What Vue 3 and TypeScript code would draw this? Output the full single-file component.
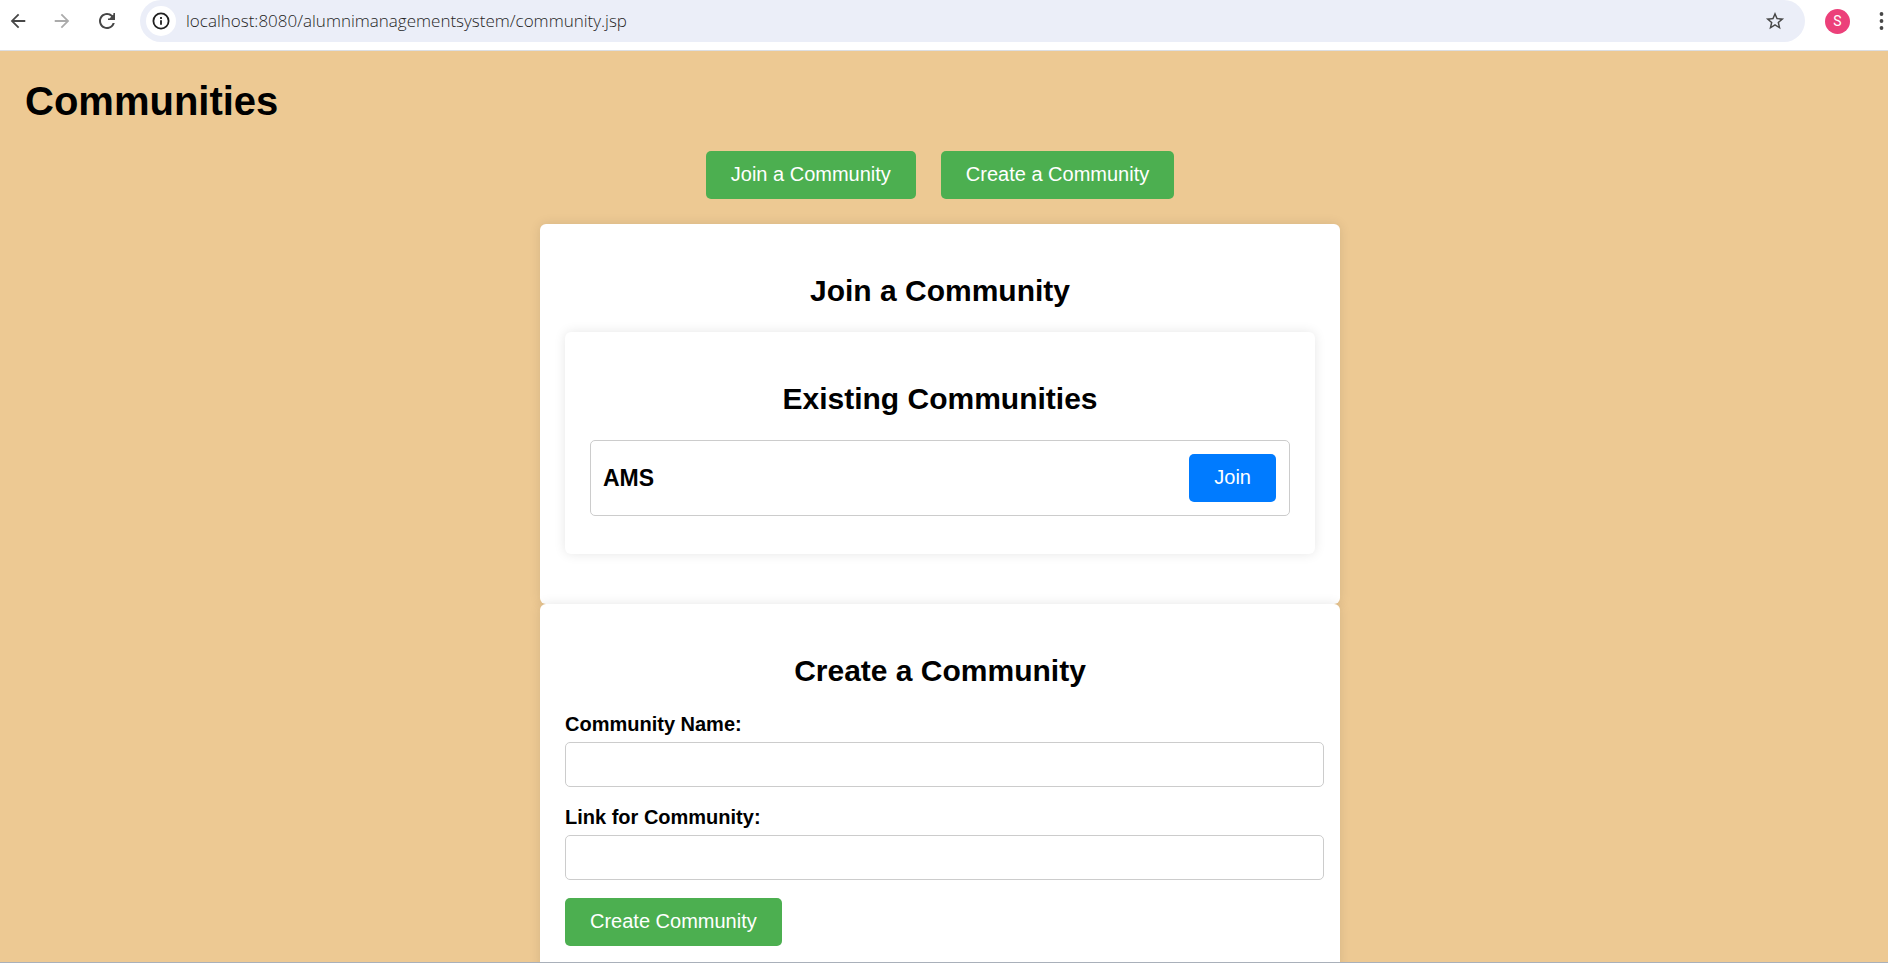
<script setup lang="ts">
import { ref } from 'vue'

interface Community {
  id: number
  name: string
}

const url = ref('localhost:8080/alumnimanagementsystem/community.jsp')
const communities = ref<Community[]>([{ id: 1, name: 'AMS' }])
const communityName = ref('')
const communityLink = ref('')

function createCommunity(): void {
  if (!communityName.value) return
  communities.value.push({ id: communities.value.length + 1, name: communityName.value })
  communityName.value = ''
  communityLink.value = ''
}
</script>

<template>
  <div class="window">
    <header class="toolbar">
      <div class="history">
        <button class="icon-btn" type="button" aria-label="Back">
          <svg viewBox="1 1 22 22" fill="#474747">
            <path d="M20 11H7.83l5.59-5.59L12 4l-8 8 8 8 1.41-1.41L7.83 13H20v-2z" />
          </svg>
        </button>
        <button class="icon-btn" type="button" aria-label="Forward">
          <svg viewBox="1 1 22 22" fill="#ababab">
            <path d="M4 11h12.17l-5.59-5.59L12 4l8 8-8 8-1.41-1.41L16.17 13H4v-2z" />
          </svg>
        </button>
        <button class="icon-btn" type="button" aria-label="Reload">
          <svg viewBox="1 2 20 20" fill="#474747">
            <path d="M17.65 6.35A7.958 7.958 0 0 0 12 4c-4.42 0-7.99 3.58-8 8s3.57 8 7.99 8c3.73 0 6.84-2.55 7.73-6h-2.08A5.99 5.99 0 0 1 12 18c-3.31 0-6-2.69-6-6s2.69-6 6-6c1.66 0 3.14.69 4.22 1.78L14.5 9.5H13V11h7V4h-1.6v1.6z" />
          </svg>
        </button>
      </div>
      <div class="address">
        <button class="info" type="button" aria-label="View site information">
          <svg viewBox="0 0 18 18" fill="none" stroke="#1f1f1f" stroke-width="1.8">
            <circle cx="9" cy="9" r="7.6" />
            <path d="M9 8.2v4.6M9 5v1.9" />
          </svg>
        </button>
        <input v-model="url" class="url" type="text" aria-label="Address" spellcheck="false" />
        <button class="icon-btn" type="button" aria-label="Bookmark this page">
          <svg viewBox="1 1 22 22" fill="#474747">
            <path d="M22 9.24l-7.19-.62L12 2 9.19 8.63 2 9.24l5.46 4.73L5.82 21 12 17.27 18.18 21l-1.63-7.03L22 9.24zM12 15.4l-3.76 2.27 1-4.28-3.32-2.88 4.38-.38L12 6.1l1.71 4.04 4.38.38-3.32 2.88 1 4.28L12 15.4z" />
          </svg>
        </button>
      </div>
      <div class="account">
        <button class="avatar" type="button" aria-label="Profile">S</button>
        <button class="menu" type="button" aria-label="Menu">
          <svg viewBox="0 0 13 20" fill="#474747">
            <circle cx="6.5" cy="3" r="1.9" />
            <circle cx="6.5" cy="10" r="1.9" />
            <circle cx="6.5" cy="17" r="1.9" />
          </svg>
        </button>
      </div>
    </header>

    <main class="page">
      <h1>Communities</h1>
      <nav class="actions">
        <button class="btn" type="button">Join a Community</button>
        <button class="btn" type="button">Create a Community</button>
      </nav>

      <section class="card">
        <h2>Join a Community</h2>
        <div class="card inner">
          <h2>Existing Communities</h2>
          <div v-for="c in communities" :key="c.id" class="community">
            <h3>{{ c.name }}</h3>
            <button class="btn join" type="button">Join</button>
          </div>
        </div>
      </section>

      <section class="card">
        <h2>Create a Community</h2>
        <form @submit.prevent="createCommunity">
          <div class="field">
            <label for="community-name">Community Name:</label>
            <input id="community-name" v-model="communityName" type="text" />
          </div>
          <div class="field">
            <label for="community-link">Link for Community:</label>
            <input id="community-link" v-model="communityLink" type="text" />
          </div>
          <button class="btn" type="submit">Create Community</button>
        </form>
      </section>
    </main>
  </div>
</template>

<style>
body {
  margin: 0;
}
</style>

<style scoped>
* {
  box-sizing: border-box;
}

.window {
  display: flex;
  flex-direction: column;
  height: 100vh;
  border-bottom: 1px solid #a9b0ba;
  font-family: "Liberation Sans", Arial, sans-serif;
  color: #000;
}

button {
  border: none;
  padding: 0;
  background: none;
  cursor: pointer;
}

svg {
  display: block;
  width: 100%;
  height: 100%;
}

.toolbar {
  display: flex;
  flex: none;
  padding: 0 0 8px 8px;
  background: #fff;
  border-bottom: 1px solid #dcdee2;
}

.history {
  display: flex;
  align-items: center;
  gap: 24px;
  margin-right: 24px;
}

.account {
  display: flex;
  align-items: center;
  gap: 25px;
  margin-left: 20px;
}

.icon-btn {
  flex: none;
  width: 20px;
  height: 20px;
}

.address {
  display: flex;
  flex: 1;
  align-items: center;
  height: 42px;
  padding: 0 20px 0 6px;
  border-radius: 21px;
  background: #ebeef8;
}

.info {
  flex: none;
  width: 30px;
  height: 30px;
  padding: 6px;
  border-radius: 50%;
  background: #fff;
}

.url {
  flex: 1;
  min-width: 0;
  padding: 0 0 0 10px;
  border: none;
  outline: none;
  background: transparent;
  font: 300 17px/26px "Open Sans", "Noto Sans", sans-serif;
  color: #1f1f1f;
}

.avatar {
  flex: none;
  width: 25px;
  height: 25px;
  border-radius: 50%;
  background: #ec407a;
  color: #fff;
  font: 14px/25px Roboto, sans-serif;
}

.menu {
  flex: none;
  width: 13px;
  height: 20px;
}

.page {
  flex: 1;
  min-height: 0;
  overflow-y: auto;
  scrollbar-width: none;
  padding: 27px 33px 27px 25px;
  background: #edc993;
}

h1 {
  margin: 0 0 27px;
  font-size: 40px;
  line-height: 46px;
}

.actions {
  display: flex;
  justify-content: center;
  gap: 25px;
  margin-bottom: 25px;
}

.btn {
  height: 48px;
  padding: 0 25px 2px;
  border-radius: 5px;
  background: #4caf50;
  color: #fff;
  font-family: inherit;
  font-size: 20px;
  line-height: 24px;
}

.card {
  max-width: 800px;
  margin: 0 auto;
  padding: 25px;
  border-radius: 6px;
  background: #fff;
  box-shadow: 0 0 12px rgba(0, 0, 0, 0.1);
}

.inner {
  margin-bottom: 25px;
}

h2 {
  margin: 25px 0;
  font-size: 30px;
  line-height: 33px;
  text-align: center;
}

.community {
  display: flex;
  align-items: center;
  justify-content: space-between;
  margin-bottom: 13px;
  padding: 13px 13px 13px 12px;
  border: 1px solid #ccc;
  border-radius: 5px;
}

h3 {
  margin: 0;
  font-size: 23px;
  line-height: 28px;
}

.join {
  background: #007bff;
}

.field {
  margin-bottom: 18px;
}

.field label {
  display: block;
  margin-bottom: 6px;
  font-size: 20px;
  line-height: 24px;
  font-weight: bold;
}

.field input {
  display: block;
  width: calc(100% + 9px);
  height: 45px;
  padding: 0 10px;
  border: 1px solid #ccc;
  border-radius: 5px;
  background: #fff;
  font: 18px/24px "Liberation Sans", Arial, sans-serif;
}
</style>
